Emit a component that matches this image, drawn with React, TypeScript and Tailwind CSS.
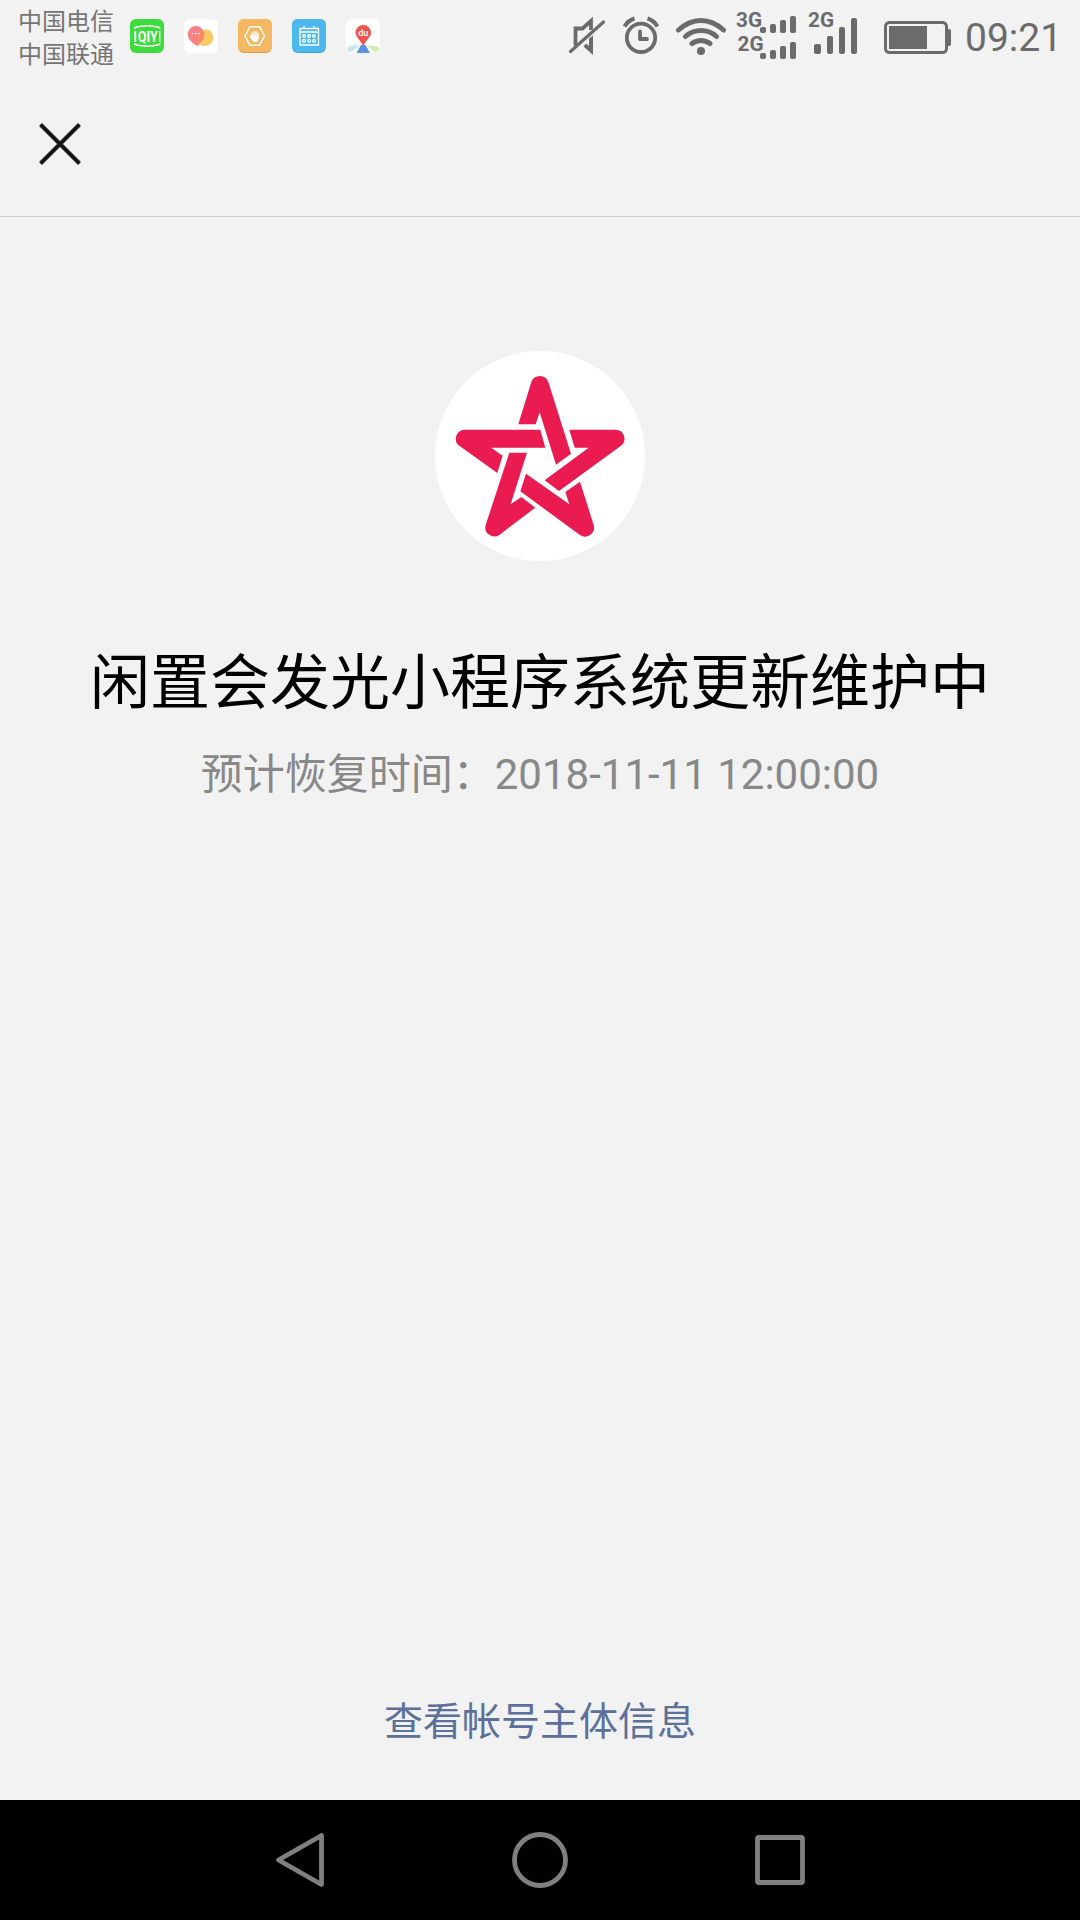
import React from 'react';

const BAR = '#6b6b6b';

const QiyiIcon = () => (
  <svg className="size-[34px]" viewBox="0 0 34 34">
    <rect width="34" height="34" rx="6" fill="#3ddb3d" />
    <path d="M5 10V8.500Q17 5 29.500 8.500V10M5 24V25.500Q17 29 29.500 25.500V24" fill="none" stroke="#fff" strokeWidth="1.600" />
    <path d="M5.300 12V23" stroke="#fff" strokeWidth="1.800" />
    <path d="M29.700 12V23" stroke="#fff" strokeWidth="1.400" />
    <text x="17.700" y="22.500" textAnchor="middle" textLength="20" lengthAdjust="spacingAndGlyphs" fontSize="15" fontWeight="700" fill="#fff" fontFamily="Roboto, sans-serif">QIY</text>
  </svg>
);

const ChatIcon = () => (
  <svg className="size-[34px]" viewBox="0 0 34 34">
    <rect width="34" height="34" rx="6" fill="#fff" />
    <path d="M21 10a8.500 8.500 0 1 1-5 15.500L13 27z" fill="#fbca62" />
    <path d="M12 7a8.300 8.300 0 0 1 8.300 8.300C20.300 21 16 24 13 27C9 24 3.700 21 3.700 15.300A8.300 8.300 0 0 1 12 7z" fill="#fb7f86" />
    <path d="M13 27C16 24 20.300 21 20.300 15.300A8.300 8.300 0 0 0 18.500 10.200C14 13 11.500 20 13 27z" fill="#f98a6d" />
    <g fill="#fff">
      <circle cx="8.500" cy="14.500" r=".8" />
      <circle cx="11.700" cy="14.500" r=".8" />
      <circle cx="15" cy="14.500" r=".8" />
    </g>
  </svg>
);

const HandIcon = () => (
  <svg className="size-[34px]" viewBox="0 0 34 34">
    <rect width="34" height="34" rx="6" fill="#dd9f4c" />
    <rect width="34" height="33" rx="6" fill="#f5b862" />
    <path d="M12 7.700H21.500L26.500 17L21.500 26.300H12L7 17z" fill="none" stroke="#fff" strokeWidth="1.500" strokeLinejoin="round" />
    <path d="M14 14V18M16 12.500V18M18 12.500V18M20 14.500V18M12 17L14.500 20" stroke="#fff" strokeWidth="1.400" strokeLinecap="round" />
    <path d="M13.300 17H20.700V19C20.700 21.500 19.500 23 17.300 23S14.500 22 13 19.500z" fill="#fff" />
  </svg>
);

const CalendarIcon = () => (
  <svg className="size-[34px]" viewBox="0 0 34 34">
    <rect width="34" height="34" rx="6" fill="#3aa5dc" />
    <rect width="34" height="33" rx="6" fill="#4cb8ee" />
    <g fill="none" stroke="#fff" strokeWidth="1.300">
      <path d="M8 9.500H26.500V26H8zM8 13H26.500M12 7V9.500M22 7V9.500" />
      {[12, 17, 22].map((x) => (
        <g key={x}>
          <circle cx={x} cy="17" r="1.400" />
          <circle cx={x} cy="21.700" r="1.400" />
        </g>
      ))}
    </g>
  </svg>
);

const MapIcon = () => (
  <svg className="size-[34px]" viewBox="0 0 34 34">
    <rect width="34" height="34" rx="6" fill="#fff" />
    <path d="M1 29Q6 26 14 26.500L5 33Q1 33 1 29z" fill="#c4e5ee" />
    <path d="M21 27Q28 26 33 28.500Q33 33 29 33z" fill="#d3ecae" />
    <path d="M1 27.500Q8 24.500 15 26L13 27.500Q8 26 1 28.500z" fill="#e5f1d6" />
    <path d="M15 26H19.500L24 34H10.500z" fill="#5a91df" />
    <path d="M17.300 6A7.700 7.700 0 0 1 25 13.800C25 18 20 21 17.300 27.500C14.500 21 9.500 18 9.500 13.800A7.700 7.700 0 0 1 17.300 6z" fill="#ee5550" />
    <text x="17.300" y="17" textAnchor="middle" fontSize="9" fontWeight="500" fill="#fff" fontFamily="Roboto, sans-serif">du</text>
  </svg>
);

const MuteIcon = () => (
  <svg className="h-[40px] w-[38px]" viewBox="0 0 38 40" fill="none" stroke={BAR}>
    <path d="M7.500 30.500V13.500H14.500L23 6V15" strokeWidth="3.800" />
    <path d="M21 23.500L25 20.500V40L15.500 31.500L18 28.500L21 31z" fill={BAR} stroke="none" />
    <path d="M2.500 36.500L35.500 7" strokeWidth="3.200" strokeLinecap="round" />
  </svg>
);

const AlarmIcon = () => (
  <svg className="h-[40px] w-[38px]" viewBox="0 0 38 40" fill="none" stroke={BAR}>
    <circle cx="19" cy="22.800" r="14.200" strokeWidth="3.800" />
    <path d="M18 16.500V24H25" strokeWidth="3.800" strokeLinecap="round" strokeLinejoin="round" />
    <path d="M2.500 11.500Q6 5.500 12.500 3.500M25.500 3.500Q32 5.500 35.500 11.500" strokeWidth="4" />
  </svg>
);

const WifiIcon = () => (
  <svg className="h-[40px] w-[52px]" viewBox="0 0 52 40" fill="none" stroke={BAR} strokeWidth="5" strokeLinecap="round">
    <path d="M3.500 15Q14 5.500 26 5.500T48.500 15M10.500 21.500Q17 15.500 26 15.500T41.500 21.500M17 28.500Q21 25.500 26 25.500T35 28.500" />
    <circle cx="26" cy="36" r="4" fill={BAR} stroke="none" />
  </svg>
);

const SignalIcons = () => (
  <svg className="h-[60px] w-[124px]" viewBox="736 4 124 60" fill={BAR}>
    <g fontFamily="Roboto, sans-serif" fontSize="20.500" fontWeight="700">
      <text x="736" y="27" textLength="26" lengthAdjust="spacingAndGlyphs">3G</text>
      <text x="737.500" y="51" textLength="26" lengthAdjust="spacingAndGlyphs">2G</text>
      <text x="808" y="27" textLength="26" lengthAdjust="spacingAndGlyphs">2G</text>
    </g>
    {[[760, 6], [770, 9], [780, 13], [790, 17]].map(([x, h]) => (
      <g key={x}>
        <rect x={x} y={33 - h} width="6" height={h} rx="2" />
        <rect x={x} y={59 - h} width="6" height={h} rx="2" />
      </g>
    ))}
    {[[814, 10], [827, 18], [839, 27], [851, 36]].map(([x, h]) => (
      <rect key={x} x={x} y={54 - h} width={x === 814 ? 7 : 6} height={h} rx="2" />
    ))}
  </svg>
);

const BatteryIcon = () => (
  <svg className="h-[34px] w-[68px]" viewBox="0 0 68 34">
    <rect x="1.500" y="1.500" width="61" height="30" rx="4" fill="none" stroke={BAR} strokeWidth="3" />
    <rect x="5" y="5" width="38" height="23" fill={BAR} />
    <path d="M63 8H65Q67 8 67 10V23Q67 25 65 25H63z" fill={BAR} />
  </svg>
);

const StatusBar = () => (
  <div className="flex h-[72px] items-start text-[#757575]">
    <div className="ml-[18px] mt-[6px] w-[112px] text-[24px] leading-[33px]">
      <p>中国电信</p>
      <p>中国联通</p>
    </div>
    <div className="mt-[19px] flex gap-[20px]">
      <QiyiIcon />
      <ChatIcon />
      <HandIcon />
      <CalendarIcon />
      <MapIcon />
    </div>
    <div className="ml-[188px] mt-[15px] flex">
      <MuteIcon />
      <div className="ml-[16px]"><AlarmIcon /></div>
      <div className="ml-[15px]"><WifiIcon /></div>
    </div>
    <div className="ml-[9px] mt-[4px]"><SignalIcons /></div>
    <div className="ml-[24px] mt-[21px]"><BatteryIcon /></div>
    <span className="ml-[13px] mt-[15px] text-[39px] leading-[46px] text-[#6b6b6b]">09:21</span>
  </div>
);

const StarLogo = () => (
  <svg className="size-[210px]" viewBox="45 32 630 630">
    <circle cx="360" cy="347" r="315" fill="#fff" />
    <g fill="#ea1b50">
      <path d="M334 125A27 27 0 0 1 385 125L453 340L408 373L359 216L347 252H295z" />
      <path d="M134 268H361L376 322H214L248 346L232 398L119 317A27 27 0 0 1 134 268z" />
      <path d="M268 337H321L272 492L304 470L346 502L239 583A27 27 0 0 1 197 554z" />
      <path d="M318 400L448 492L436 455L480 424L521 554A27 27 0 0 1 480 584L301 453z" />
      <path d="M448 268H586A27 27 0 0 1 602 317L417 452L374 420L506 322H464z" />
    </g>
  </svg>
);

const NavBar = () => (
  <nav className="flex h-[120px] items-center justify-center gap-[180px] bg-black">
    <svg className="size-[60px]" viewBox="0 0 60 60" fill="none" stroke="#808080" strokeWidth="4.800" strokeLinejoin="round">
      <path d="M8.500 30L51.500 5.500V54.500z" />
    </svg>
    <svg className="size-[60px]" viewBox="0 0 60 60" fill="none" stroke="#808080" strokeWidth="4.800">
      <circle cx="30" cy="30" r="25.500" />
    </svg>
    <svg className="size-[60px]" viewBox="0 0 60 60" fill="none" stroke="#808080" strokeWidth="4.800">
      <rect x="7.500" y="7.500" width="45" height="45" rx="1.500" />
    </svg>
  </nav>
);

const App: React.FC = () => {
  return (
    <div className="flex h-[1920px] w-[1080px] flex-col overflow-hidden bg-[#f2f2f2] font-[Roboto,'Noto_Sans_CJK_SC',sans-serif]">
      <StatusBar />
      <header className="flex h-[145px] items-center border-b border-[#d0d0d0] px-[38px]">
        <svg className="size-[44px]" viewBox="0 0 44 44" stroke="#171717" strokeWidth="4">
          <path d="M2.500 2.500L41.500 41.500M41.500 2.500L2.500 41.500" />
        </svg>
      </header>
      <main className="flex grow flex-col items-center pt-[134px]">
        <StarLogo />
        <h1 className="mt-[79px] text-[60px] leading-[88px] text-black">闲置会发光小程序系统更新维护中</h1>
        <p className="mt-[16px] text-[42px] leading-[62px] text-[#888888]">预计恢复时间：2018-11-11 12:00:00</p>
        <a className="mb-[49px] mt-auto text-[39px] leading-[58px] text-[#5b709a]">查看帐号主体信息</a>
      </main>
      <NavBar />
    </div>
  );
};

export default App;
